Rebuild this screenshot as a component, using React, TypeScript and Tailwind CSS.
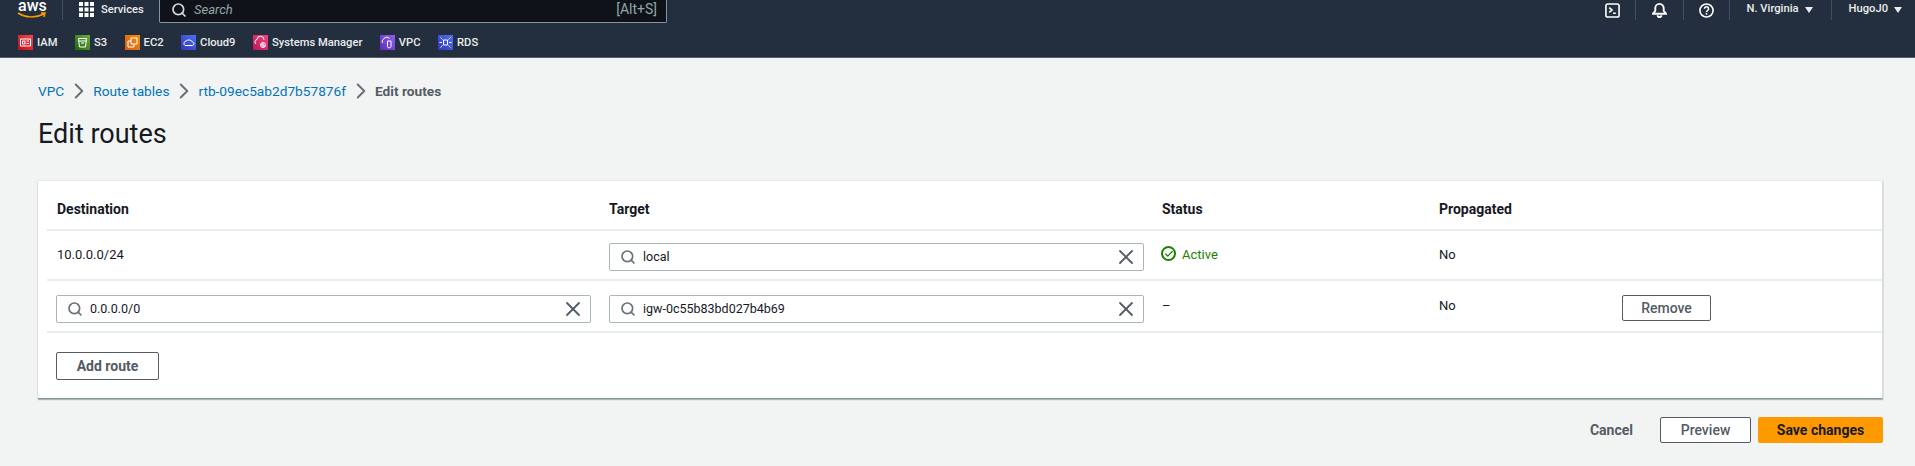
import { Check, ChevronRight, Search, X } from "lucide-react";

const services = [
  { name: "IAM", color: "from-[#bd0816] to-[#f5434f]", path: "M2.500 4h10v7h-10z M4.500 6h2.500v3H4.500z M8.500 6H11 M8.500 8.500H11" },
  { name: "S3", color: "from-[#1b660f] to-[#6cae3e]", path: "M3.500 3.500h8l-1 8.500h-6z M3.500 6h8 M6 8h3" },
  { name: "EC2", color: "from-[#d05c17] to-[#f78e04]", path: "M6 3h6v6H6z M6 6H3v6h6V9" },
  { name: "Cloud9", color: "from-[#3334b9] to-[#4d72f3]", path: "M4 10.500h7.500a1.800 1.800 0 0 0 0-3.500 4 3.500 0 0 0-6.500-1 2.500 2.500 0 0 0-1 4.500z" },
  { name: "Systems Manager", color: "from-[#bc1356] to-[#f34482]", path: "M3 9a2.500 2.500 0 0 1 1-4.500 3.500 3.500 0 0 1 7 0.500 M10 7.500a2.500 2.500 0 1 0 0.100 5 2.500 2.500 0 0 0-0.100-5z M8 9.500l4 1.500 M10 7.500v5" },
  { name: "VPC", color: "from-[#5a30b5] to-[#945df2]", path: "M3 8a2 2 0 0 1 .500-3.500 3.500 3.500 0 0 1 6-1 M7.500 6h3.500v5.500a1.800 1.800 0 0 1-3.500 0z" },
  { name: "RDS", color: "from-[#3334b9] to-[#4d72f3]", path: "M5.500 5h4v5h-4z M2.500 2.500l2 2 M12.500 2.500l-2 2 M2.500 12.500l2-2 M12.500 12.500l-2-2 M1.500 7.500h2.500 M11 7.500h2.500" },
];

function ServiceLink({ name, color, path }: { name: string; color: string; path: string }) {
  return (
    <a className="flex items-center gap-[4px] text-[11.2px] font-medium text-[#eaeded]">
      <span className={`w-[15px] h-[15px] shrink-0 bg-gradient-to-tr ${color}`}>
        <svg viewBox="0 0 15 15" className="w-full h-full" fill="none" stroke="white" strokeWidth="1">
          <path d={path} />
        </svg>
      </span>
      {name}
    </a>
  );
}

function Caret() {
  return <span className="ml-[6px] inline-block border-x-[4px] border-t-[6px] border-x-transparent border-t-[#eaeded]" />;
}

function NavDivider() {
  return <span className="block w-px h-[20px] bg-[#414d5c] shrink-0" />;
}

function TopBar() {
  return (
    <div className="flex items-start h-[23px] pl-[17px] pr-[13px] text-[#eaeded]">
      <div className="relative w-[30px] h-[20px] shrink-0">
        <span className="absolute left-[1px] top-0 text-[16px] leading-[12px] font-medium text-white">aws</span>
        <svg viewBox="0 0 30 7" className="absolute left-0 top-[12px] w-[30px] h-[7px]" fill="none" stroke="#ff9900" strokeWidth="1.500">
          <path d="M1 1c8 5 18 5 26 1 M24 1l4 0-1 4" />
        </svg>
      </div>
      <span className="ml-[15px]"><NavDivider /></span>
      <svg viewBox="0 0 15 15" className="ml-[16px] mt-[2px] w-[15px] h-[15px] shrink-0" fill="white">
        <path d="M0 0h4v4H0z M5.500 0h4v4h-4z M11 0h4v4h-4z M0 5.500h4v4H0z M5.500 5.500h4v4h-4z M11 5.500h4v4h-4z M0 11h4v4H0z M5.500 11h4v4h-4z M11 11h4v4h-4z" />
      </svg>
      <span className="ml-[7px] w-[58px] text-[11.2px] leading-[19px] font-medium">Services</span>
      <div className="flex items-center w-[508px] h-[23px] bg-[#0f1319] border-x border-b border-[#879596] rounded-b-[2px] pl-[11px] pr-[9px]">
        <Search className="w-[16px] h-[16px] text-[#d5dbdb] -mt-[3px]" strokeWidth={2.500} />
        <span className="ml-[7px] -mt-[3px] italic text-[13px] text-[#95a5a6]">Search</span>
        <span className="ml-auto -mt-[3px] text-[14px] text-[#95a5a6]">[Alt+S]</span>
      </div>
      <div className="ml-auto flex items-start">
        <svg viewBox="0 0 16 16" className="w-[15px] h-[15px] mt-[3px]" fill="none" stroke="white" strokeWidth="1.700">
          <rect x="1" y="1" width="14" height="14" rx="2" />
          <path d="M4.500 5l3 2.500-3 2.500 M8.500 11h3" />
        </svg>
        <span className="ml-[15px]"><NavDivider /></span>
        <svg viewBox="0 0 16 16" className="ml-[16px] w-[15px] h-[16px] mt-[2px]" fill="none" stroke="white" strokeWidth="2">
          <path d="M1 12h14l-2.500-3V6a4.500 4.500 0 0 0-9 0v3z M6 13.500a2 2 0 0 0 4 0" />
        </svg>
        <span className="ml-[16px]"><NavDivider /></span>
        <svg viewBox="0 0 16 16" className="ml-[15px] w-[15px] h-[15px] mt-[3px]" fill="none" stroke="white" strokeWidth="1.700">
          <circle cx="8" cy="8" r="7" />
          <path d="M5.800 6.200a2.200 2.200 0 1 1 3.300 1.900c-.7.400-1.100.8-1.100 1.700 M8 11v1.500" />
        </svg>
        <span className="ml-[15px]"><NavDivider /></span>
        <span className="ml-[17px] flex items-center h-[19px] text-[11.2px] font-medium">N. Virginia<Caret /></span>
        <span className="ml-[18px]"><NavDivider /></span>
        <span className="ml-[17px] flex items-center h-[19px] text-[11.2px] font-medium">HugoJ0<Caret /></span>
      </div>
    </div>
  );
}

function Crumb({ children }: { children: string }) {
  return (
    <>
      <a className="text-[#0073bb]">{children}</a>
      <ChevronRight className="w-[26px] h-[26px] mx-[1.500px] text-[#687078]" strokeWidth={1.800} />
    </>
  );
}

function SearchField({ value }: { value: string }) {
  return (
    <div className="flex items-center w-[535px] h-[28px] bg-white border border-[#aab7b8] rounded-[2px] pl-[10px] pr-[5px]">
      <Search className="w-[16px] h-[16px] text-[#687078] shrink-0" strokeWidth={2.500} />
      <span className="ml-[7px] text-[12.5px] text-[#16191f]">{value}</span>
      <X className="ml-auto w-[24px] h-[24px] text-[#545b64] shrink-0" strokeWidth={1.800} />
    </div>
  );
}

function OutlineButton({ label, className }: { label: string; className: string }) {
  return (
    <button className={`border border-[#545b64] rounded-[2px] bg-white text-[#545b64] text-[14px] ${className}`}>
      {label}
    </button>
  );
}

const cols = "grid grid-cols-[552px_553px_277px_184px_278px] border-b-2 border-[#eaeded]";

export default function App() {
  return (
    <div className="w-[1915px] h-[466px] overflow-hidden bg-[#f2f3f3] font-[Roboto,sans-serif] text-[13px] text-[#16191f]">
      <header className="h-[58px] bg-[#232f3e] border-b border-[#545b64]">
        <TopBar />
        <nav className="flex items-center h-[34px] pt-[6px] pl-[18px] gap-[17.500px]">
          {services.map((s) => (
            <ServiceLink key={s.name} {...s} />
          ))}
        </nav>
      </header>

      <main className="pl-[38px] pr-[32px]">
        <div className="flex items-center h-[20px] mt-[23px] text-[13.7px]">
          <Crumb>VPC</Crumb>
          <Crumb>Route tables</Crumb>
          <Crumb>rtb-09ec5ab2d7b57876f</Crumb>
          <span className="font-bold text-[#545b64]">Edit routes</span>
        </div>
        <h1 className="mt-[17px] text-[27px] leading-[33px] font-normal">Edit routes</h1>

        <section className="mt-[30px] h-[218px] bg-white border-b border-[#879596] border-r border-r-[#d5dbdb] shadow-[0_1px_1px_#aab7b8,0_0_1px_#aab7b8] pl-[9px]">
          <div className={`${cols} h-[50px] pt-[8px] items-center text-[14px] font-bold`}>
            <span className="pl-[10px]">Destination</span>
            <span className="pl-[10px]">Target</span>
            <span className="pl-[10px]">Status</span>
            <span className="pl-[10px]">Propagated</span>
          </div>
          <div className={`${cols} h-[50px] pt-[12px]`}>
            <span className="pl-[10px] mt-[2px]">10.0.0.0/24</span>
            <div className="pl-[10px]"><SearchField value="local" /></div>
            <span className="pl-[9px] mt-[2px] flex items-start gap-[6px] text-[#1d8102]">
              <span className="mt-[1px] w-[15px] h-[15px] rounded-full border-2 border-[#1d8102] flex items-center justify-center">
                <Check className="w-[10px] h-[10px]" strokeWidth={3} />
              </span>
              Active
            </span>
            <span className="pl-[10px] mt-[2px]">No</span>
          </div>
          <div className={`${cols} h-[52px] pt-[14px]`}>
            <div className="pl-[9px]"><SearchField value="0.0.0.0/0" /></div>
            <div className="pl-[10px]"><SearchField value="igw-0c55b83bd027b4b69" /></div>
            <span className="pl-[10px] mt-px">–</span>
            <span className="pl-[10px] mt-px">No</span>
            <div className="pl-[9px]"><OutlineButton label="Remove" className="w-[89px] h-[26px] font-medium" /></div>
          </div>
          <div className="pt-[19px] pl-[9px]">
            <OutlineButton label="Add route" className="w-[103px] h-[28px] font-bold" />
          </div>
        </section>

        <footer className="flex items-center justify-end mt-[18px]">
          <span className="mr-[27px] text-[14px] font-bold text-[#545b64]">Cancel</span>
          <OutlineButton label="Preview" className="w-[91px] h-[26px] mr-[7px] font-medium" />
          <button className="w-[125px] h-[26px] rounded-[2px] bg-[#ff9900] text-[14px] font-bold text-[#16191f]">Save changes</button>
        </footer>
      </main>
    </div>
  );
}
